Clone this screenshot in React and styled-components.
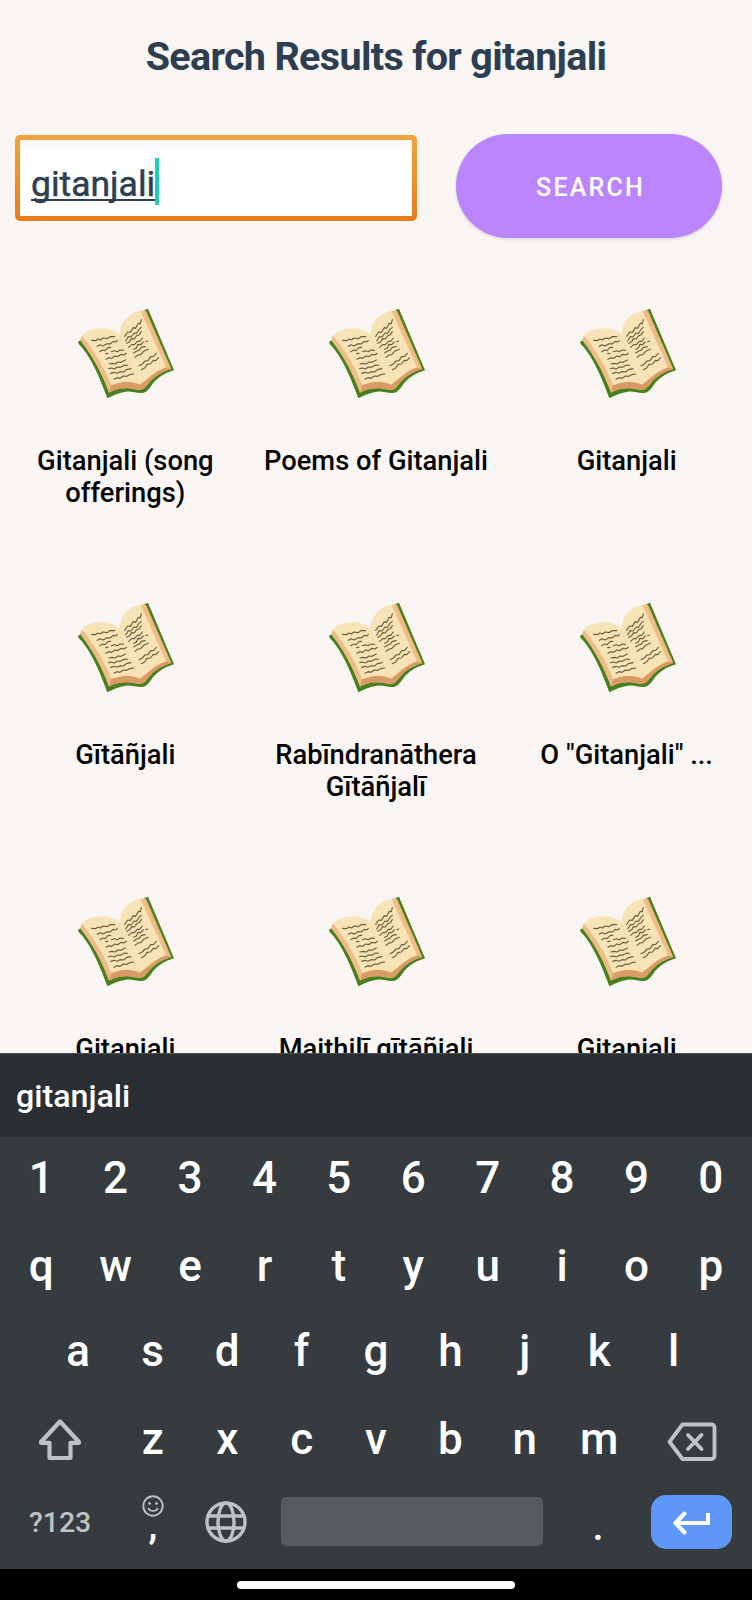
import React from 'react';
import styled, { createGlobalStyle } from 'styled-components';

const GlobalStyle = createGlobalStyle`
  * { box-sizing: border-box; }
  body { margin: 0; background: #f8f5f2; font-family: Roboto, "Noto Sans", sans-serif; }
`;

const Screen = styled.div`
  width: 752px;
  height: 1600px;
  display: flex;
  flex-direction: column;
  overflow: hidden;
  background: #f8f5f2;
`;

const Results = styled.main`
  height: 1053px;
  flex: none;
  overflow: hidden;
`;

const Title = styled.h1`
  margin: 0;
  padding-top: 34px;
  height: 134px;
  text-align: center;
  color: #2c3e50;
  font-size: 39.5px;
  line-height: 46px;
  font-weight: 700;
  letter-spacing: -0.66px;
`;

const SearchBar = styled.div`
  display: flex;
  align-items: flex-start;
  padding-left: 15px;
  height: 144px;
`;

const Field = styled.div`
  width: 402px;
  height: 86px;
  margin: 1px 39px 0 0;
  padding: 5px;
  border-radius: 5px;
  background: linear-gradient(#f3a23c, #e67e1a);
`;

const FieldInner = styled.div`
  height: 100%;
  padding: 18px 0 0 11px;
  display: flex;
  align-items: flex-start;
  border-radius: 1px;
  background: linear-gradient(#f6f6f6, #fdfdfd 14px, #fefefe);
`;

const FieldText = styled.span`
  margin-top: 6px;
  color: #2c3e50;
  font-size: 35.5px;
  line-height: 41px;
  -webkit-text-stroke: 0.5px #2c3e50;
  text-decoration: underline;
  text-decoration-thickness: 2px;
  text-decoration-skip-ink: none;
  text-underline-offset: 3px;
`;

const Caret = styled.span`
  width: 4px;
  height: 47px;
  background: #1fcdbd;
`;

const SearchButton = styled.button`
  width: 266px;
  height: 104px;
  padding: 3px 0 0 3px;
  border: 0;
  border-radius: 52px;
  background: #bb86fc;
  color: #fff;
  font: 500 25px Roboto, sans-serif;
  letter-spacing: 2.2px;
  box-shadow: 0 1px 3px rgba(80, 60, 110, 0.22);
`;

const BookGrid = styled.div`
  display: grid;
  grid-template-columns: repeat(3, 1fr);
  grid-auto-rows: 294px;
`;

const BookCard = styled.article`
  display: flex;
  flex-direction: column;
  align-items: center;
  padding-top: 12px;
`;

const BookTitle = styled.div`
  width: 230px;
  margin-top: 35px;
  text-align: center;
  color: #050505;
  font-size: 27.3px;
  line-height: 32px;
  font-weight: 500;
`;

const Suggestions = styled.div`
  height: 84px;
  flex: none;
  padding: 23px 16px 0;
  border-top: 1px solid #4a4e51;
  background: #2a2f33;
  color: #fff;
  font-size: 32.2px;
  line-height: 38px;
  font-weight: 500;
`;

const Keyboard = styled.div`
  height: 432px;
  flex: none;
  padding: 0 4px;
  background: #363b3f;
`;

const KeyRow = styled.div`
  height: ${(p) => p.$height}px;
  padding: ${(p) => p.$top}px ${(p) => p.$side || 0}px 0;
  display: flex;
`;

const Key = styled.div`
  flex: ${(p) => p.$flex || 1} 0 0;
  min-width: 0;
  padding-top: ${(p) => p.$drop || 0}px;
  display: flex;
  justify-content: center;
  align-items: flex-start;
  color: #fff;
  font-size: 44px;
  line-height: 52px;
  font-weight: 500;
`;

const BottomRow = styled.div`
  height: 86px;
  display: flex;
  align-items: flex-start;
  padding: 12px 16px 0 25px;
`;

const SymbolsKey = styled.div`
  width: 90px;
  padding: 11px 0 0;
  color: #bfc1c3;
  font-size: 28.4px;
  line-height: 34px;
  font-weight: 500;
`;

const EmojiKey = styled.div`
  width: 68px;
  display: flex;
  flex-direction: column;
  align-items: center;
  color: #fff;
  font-size: 36px;
  line-height: 19px;
  font-weight: 700;
`;

const GlobeKey = styled.div`
  width: 78px;
  padding: 6px 0 0;
  display: flex;
  justify-content: center;
`;

const SpaceKey = styled.div`
  width: 262px;
  height: 49px;
  margin: 2px 0 0 16px;
  border-radius: 5px;
  background: #56595d;
`;

const PeriodKey = styled.div`
  width: 110px;
  margin-right: -2px;
  padding-top: 12px;
  text-align: center;
  color: #fff;
  font-size: 40px;
  line-height: 40px;
  font-weight: 500;
`;

const EnterKey = styled.div`
  width: 81px;
  height: 54px;
  border-radius: 15px;
  display: flex;
  align-items: center;
  justify-content: center;
  padding-top: 2px;
  background: #5e97f6;
`;

const NavBar = styled.div`
  flex: 1;
  display: flex;
  justify-content: center;
  padding-top: 12px;
  background: #000;
`;

const HomePill = styled.div`
  width: 278px;
  height: 8px;
  border-radius: 4px;
  background: #fff;
`;

const Book = () => (
  <svg width="130" height="120" viewBox="0 0 390 360" fill="none">
    <path d="M54 155L64 150L180 230L254 60L264 56L342 241C312 250 292 264 277 282C268 298 258 308 246 309C228 310 214 302 198 305C178 308 158 316 142 325C120 262 88 192 56 162Z" fill="#48801d" />
    <path d="M66 140C62 146 62 150 64 154C98 196 126 252 147 308C166 297 186 293 206 295C222 297 236 303 248 298C266 289 268 258 334 237L258 62L240 62L178 200Z" fill="#eeb47c" />
    <path d="M148 307L153 286C184 273 208 272 237 283C266 272 286 241 319 232L334 237C268 256 268 289 248 298C224 302 204 284 148 307Z" fill="#d99a66" />
    <path d="M66 137C84 112 148 104 178 134C181 98 205 62 252 62L319 232C280 245 262 268 240 284C212 271 184 274 153 286C131 226 101 184 66 137Z" fill="#f7e4b6" />
    <path d="M66 137C101 184 131 226 153 286L147 306C126 250 96 196 63 154C61 148 62 142 66 137Z" fill="#efbb86" />
    <path d="M242 64L252 62L330 235L318 232Z" fill="#f0bd88" />
    <path d="M178 138c18 40 22 99 62 142" stroke="#efdbab" strokeWidth="3" />
    <g stroke="#6c5c3d" strokeWidth="3.4" strokeLinecap="round" strokeLinejoin="round">
      <path d="M95 151l12 1 7-5 7 3 8-6 12 2 9-6 14 0M112 169l8-5 9 4 12-7 9 1 10-8 8 2 4-5M119 185l9-5 7 2 9-9 8-1M137 191l7-1M154 185l9-3 9 3 8-5 10 1M138 208l8-5 9 2 9-7 9 2 10-7 9 2 7-5M147 222l9-2 9 2 9-6 9 1 13-7M146 236l8-2 9 3 9-6 9 1 13-7 8 1M152 250l10-3 9 3 9-5 11 1 8-7 14-3M162 268l9-5 9 2 10-7 10 1 9-5 12-2" />
      <path d="M194 139l9-13 8 1 9-14 7 2 8-15 6 1 3-12M197 153l8-13 8 1 9-12 8 1 7-12 7-6M200 160l9-5 6-9 8 1 7-10 8-3 6-9M206 172l9-8 8 0 9-10 7 0 8-10M221 178l8-4 5-11 8 1 8-8M221 189l9-6 7-2 7-9 12-2M225 202l9-7 8-1 9-10 14-6M237 227l10-5 8-9 9-1 8-12 9-1 8-9M244 239l10-5 7-11 10-1 9-11 7 1 9-9M257 155l6-2" />
    </g>
  </svg>
);

const iconStroke = { fill: 'none', stroke: '#bfc1c4', strokeLinejoin: 'round', strokeLinecap: 'round' };

const ShiftIcon = () => (
  <svg width="44" height="42" viewBox="0 0 44 42" {...iconStroke} strokeWidth="4.2">
    <path d="M22 2.500L41 23v.8H32.500V39H11.500V23.800H3V23Z" />
  </svg>
);

const BackspaceIcon = () => (
  <svg width="50" height="40" viewBox="0 0 50 40" {...iconStroke} strokeWidth="3.9">
    <path d="M15.500 2.500H44.500a3 3 0 0 1 3 3V34a3 3 0 0 1-3 3H15.500L2.500 19.800Z" />
    <path d="M21 13L34.500 27M34.500 13L21 27" />
  </svg>
);

const SmileIcon = () => (
  <svg width="22" height="22" viewBox="0 0 22 22" {...iconStroke} strokeWidth="1.9">
    <circle cx="11" cy="11" r="9.700" />
    <path d="M6.500 13.800c2 3.100 7 3.100 9 0" />
    <circle cx="7.500" cy="8.500" r="1" fill="#bfc1c4" strokeWidth="1" />
    <circle cx="14.500" cy="8.500" r="1" fill="#bfc1c4" strokeWidth="1" />
  </svg>
);

const GlobeIcon = () => (
  <svg width="42" height="42" viewBox="0 0 42 42" {...iconStroke} strokeWidth="3.400">
    <circle cx="21" cy="21" r="19" />
    <ellipse cx="21" cy="21" rx="8" ry="19" />
    <path d="M3.500 15H38.500M3.500 27H38.500" />
  </svg>
);

const EnterIcon = () => (
  <svg width="37" height="24" viewBox="0 0 37 24" fill="none" stroke="#fff" strokeWidth="4">
    <path d="M35 2V12H3" />
    <path d="M11.500 2.500L2.500 12L11.500 21.500" strokeLinecap="round" strokeLinejoin="round" />
  </svg>
);

const books = [
  'Gitanjali (song offerings)',
  'Poems of Gitanjali',
  'Gitanjali',
  'Gītāñjali',
  'Rabīndranāthera Gītāñjalī',
  'O "Gitanjali" ...',
  'Gitanjali',
  'Maithilī gītāñjali',
  'Gitanjali',
];

const keys = (letters) => [...letters].map((k) => <Key key={k}>{k}</Key>);

export default function App() {
  return (
    <Screen>
      <GlobalStyle />
      <Results>
        <Title>Search Results for gitanjali</Title>
        <SearchBar>
          <Field>
            <FieldInner>
              <FieldText>gitanjali</FieldText>
              <Caret />
            </FieldInner>
          </Field>
          <SearchButton>SEARCH</SearchButton>
        </SearchBar>
        <BookGrid>
          {books.map((title, i) => (
            <BookCard key={i}>
              <Book />
              <BookTitle>{title}</BookTitle>
            </BookCard>
          ))}
        </BookGrid>
      </Results>
      <Suggestions>gitanjali</Suggestions>
      <Keyboard>
        <KeyRow $height={86} $top={15}>{keys('1234567890')}</KeyRow>
        <KeyRow $height={86} $top={17}>{keys('qwertyuiop')}</KeyRow>
        <KeyRow $height={86} $top={16} $side={37}>{keys('asdfghjkl')}</KeyRow>
        <KeyRow $height={88} $top={18}>
          <Key $flex={1.5} $drop={6}><ShiftIcon /></Key>
          {keys('zxcvbnm')}
          <Key $flex={1.5} $drop={9}><BackspaceIcon /></Key>
        </KeyRow>
        <BottomRow>
          <SymbolsKey>?123</SymbolsKey>
          <EmojiKey><SmileIcon />,</EmojiKey>
          <GlobeKey><GlobeIcon /></GlobeKey>
          <SpaceKey />
          <PeriodKey>.</PeriodKey>
          <EnterKey><EnterIcon /></EnterKey>
        </BottomRow>
      </Keyboard>
      <NavBar><HomePill /></NavBar>
    </Screen>
  );
}
